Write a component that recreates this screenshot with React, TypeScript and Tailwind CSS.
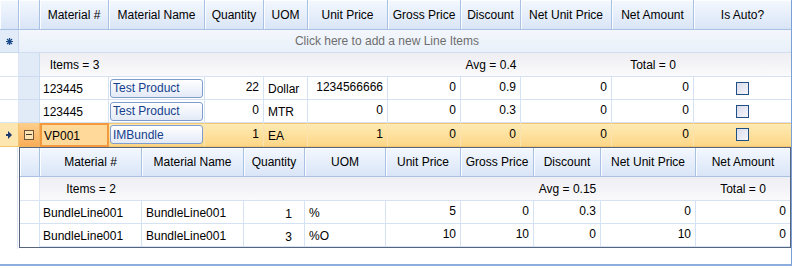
import React from "react";

const OUTER_COLS =
  "grid grid-cols-[19px_21px_69px_96px_59px_44px_80px_73px_60px_91px_82px_97px]";
const CHILD_COLS =
  "grid grid-cols-[20px_102px_102px_61px_81px_75px_73px_67px_95px_94px]";

type Row = {
  mat: string;
  name: string;
  qty: string;
  uom: string;
  unit: string;
  gross: string;
  disc: string;
  nup: string;
  na: string;
};

const ROWS: Row[] = [
  { mat: "123445", name: "Test Product", qty: "22", uom: "Dollar", unit: "1234566666", gross: "0", disc: "0.9", nup: "0", na: "0" },
  { mat: "123445", name: "Test Product", qty: "0", uom: "MTR", unit: "0", gross: "0", disc: "0.3", nup: "0", na: "0" },
];

const SELECTED: Row = { mat: "VP001", name: "IMBundle", qty: "1", uom: "EA", unit: "1", gross: "0", disc: "0", nup: "0", na: "0" };

const CHILD_ROWS = [
  { mat: "BundleLine001", name: "BundleLine001", qty: "1", uom: "%", unit: "5", gross: "0", disc: "0.3", nup: "0", na: "0" },
  { mat: "BundleLine001", name: "BundleLine001", qty: "3", uom: "%O", unit: "10", gross: "10", disc: "0", nup: "10", na: "0" },
];

const OUTER_HEADERS = ["Material #", "Material Name", "Quantity", "UOM", "Unit Price", "Gross Price", "Discount", "Net Unit Price", "Net Amount", "Is Auto?"];
const CHILD_HEADERS = ["Material #", "Material Name", "Quantity", "UOM", "Unit Price", "Gross Price", "Discount", "Net Unit Price", "Net Amount"];

/* ---------------- small pieces ---------------- */

function HeadCell({ children, last }: { children?: React.ReactNode; last?: boolean }) {
  return (
    <div
      className={`flex items-center justify-center border-b border-[#a9c2e4] bg-linear-to-b from-[#f4f8fe] to-[#d9e5f7] shadow-[inset_1px_1px_0_#fcfdff] whitespace-nowrap ${
        last ? "" : "border-r"
      }`}
    >
      {children}
    </div>
  );
}

function SummaryCell({ children }: { children?: React.ReactNode }) {
  return (
    <div className="flex items-center justify-center border-b border-[#d6e2f2] bg-linear-to-b from-[#eeeef3] to-[#fafafc] whitespace-nowrap">
      {children}
    </div>
  );
}

function Cell({
  children,
  right,
  num,
  pl = "pl-[3px]",
  last,
  sel,
}: {
  children?: React.ReactNode;
  right?: boolean;
  num?: boolean;
  pl?: string;
  last?: boolean;
  sel?: boolean;
}) {
  return (
    <div
      className={[
        "flex items-center whitespace-nowrap border-b",
        sel ? "border-[#f2c56f]" : "border-[#d5e2f3]",
        last ? "" : sel ? "border-r border-r-[#fae3b0]" : "border-r",
        right ? "justify-end pr-[4px]" : pl,
      ].join(" ")}
    >
      <span className={num ? "-translate-y-[1px]" : "translate-y-[1px]"}>{children}</span>
    </div>
  );
}

function TextBox({ text }: { text: string }) {
  return (
    <div className="flex items-center border-b border-r border-[#d5e2f3] pl-[1px] pr-[1px]">
      <div className="flex h-[19px] w-full items-center rounded-[3px] border border-[#7f9dcc] bg-linear-to-b from-[#ffffff] to-[#e3eaf7] pl-[2px] text-[#163f8c] whitespace-nowrap">
        {text}
      </div>
    </div>
  );
}

function CheckBox() {
  return (
    <span className="block h-[13px] w-[13px] border-[1.5px] border-[#1f4f85] bg-linear-to-br from-[#d9dcec] to-[#f6f6fb]" />
  );
}

function ArrowIcon() {
  return (
    <svg width="6" height="8" viewBox="0 0 6 8">
      <path d="M0 3h2V0l4 4-4 4V5H0z" fill="#1b3a6e" />
    </svg>
  );
}

function StarIcon() {
  return (
    <svg width="7" height="7" viewBox="0 0 7 7" stroke="#1d4a8a" strokeWidth="1.2">
      <path d="M3.5 0v7M0 3.5h7M1 1l5 5M6 1l-5 5" />
    </svg>
  );
}

/* ---------------- Component ---------------- */

export default function App() {
  return (
    <div className="h-[268px] w-[793px] bg-white text-[12px] text-black font-['Liberation_Sans',Arial,sans-serif]">
      <div className="flex h-[266px] w-[792px] flex-col overflow-hidden border-r border-b-2 border-r-[#7aa0d6] border-b-[#8caedd]">
        {/* Header */}
        <div className={`${OUTER_COLS} h-[30px] shrink-0`}>
          <HeadCell />
          <HeadCell />
          {OUTER_HEADERS.map((h, i) => (
            <HeadCell key={h} last={i === OUTER_HEADERS.length - 1}>
              {h}
            </HeadCell>
          ))}
        </div>

        {/* New row */}
        <div className={`${OUTER_COLS} h-[23px] shrink-0`}>
          <div className="flex items-center justify-center border-r border-b border-[#c9d9ef] bg-[#e2ebf8]">
            <StarIcon />
          </div>
          <div className="col-span-11 flex items-center justify-center border-b border-[#d0def2] bg-linear-to-b from-[#f4f7fc] to-[#e9f0fa] pr-[36px] text-[#6e6e6e]">
            Click here to add a new Line Items
          </div>
        </div>

        {/* Summary */}
        <div className={`${OUTER_COLS} h-[24px] shrink-0`}>
          <div className="border-r border-b border-[#dce5f2] bg-white" />
          <div className="border-r border-b border-[#cbdaef] bg-[#e1eaf7]" />
          <SummaryCell>Items = 3</SummaryCell>
          <SummaryCell />
          <SummaryCell />
          <SummaryCell />
          <SummaryCell />
          <SummaryCell />
          <SummaryCell>Avg = 0.4</SummaryCell>
          <SummaryCell />
          <SummaryCell>Total = 0</SummaryCell>
          <SummaryCell />
        </div>

        {/* Data rows */}
        {ROWS.map((r, i) => (
          <div key={i} className={`${OUTER_COLS} h-[23px] shrink-0`}>
            <div className="border-r border-b border-[#dce5f2] bg-white" />
            <div className="border-r border-b border-[#cbdaef] bg-[#e1eaf7]" />
            <Cell>{r.mat}</Cell>
            <TextBox text={r.name} />
            <Cell right num>{r.qty}</Cell>
            <Cell pl="pl-[4px]">{r.uom}</Cell>
            <Cell right num>{r.unit}</Cell>
            <Cell right num>{r.gross}</Cell>
            <Cell right num>{r.disc}</Cell>
            <Cell right num>{r.nup}</Cell>
            <Cell right num>{r.na}</Cell>
            <div className="flex items-center justify-center border-b border-[#d5e2f3]">
              <CheckBox />
            </div>
          </div>
        ))}

        {/* Selected row */}
        <div className={`${OUTER_COLS} h-[24px] shrink-0 bg-linear-to-b from-[#feebb4] to-[#fdd686] shadow-[inset_0_1px_0_#f3c672]`}>
          <div className="flex items-center justify-center border-r border-b border-[#f2c56f] bg-[#fde6b0]">
            <ArrowIcon />
          </div>
          <div className="flex items-center justify-center border-r border-b border-[#f0b45f] bg-linear-to-b from-[#fccf8c] to-[#f9ad57]">
            <span className="flex h-[10px] w-[10px] items-center justify-center border border-[#6e5538] bg-[#fde2b2]">
              <span className="block h-[1px] w-[6px] bg-[#4a3a28]" />
            </span>
          </div>
          <div className="flex items-center border-2 border-[#f39a3f] bg-[#fed99a] pl-[2px]">
            <span className="translate-y-[1px]">{SELECTED.mat}</span>
          </div>
          <div className="flex items-center border-b border-r border-[#f2c56f] border-r-[#fae3b0] pl-[1px] pr-[1px]">
            <div className="flex h-[19px] w-full items-center rounded-[3px] border border-[#7f9dcc] bg-linear-to-b from-[#ffffff] to-[#e3eaf7] pl-[2px] text-[#163f8c]">
              {SELECTED.name}
            </div>
          </div>
          <Cell sel right num>{SELECTED.qty}</Cell>
          <Cell sel pl="pl-[4px]">{SELECTED.uom}</Cell>
          <Cell sel right num>{SELECTED.unit}</Cell>
          <Cell sel right num>{SELECTED.gross}</Cell>
          <Cell sel right num>{SELECTED.disc}</Cell>
          <Cell sel right num>{SELECTED.nup}</Cell>
          <Cell sel right num>{SELECTED.na}</Cell>
          <div className="flex items-center justify-center border-b border-[#f2c56f]">
            <CheckBox />
          </div>
        </div>

        {/* Detail (child grid) */}
        <div className="flex h-[102px] shrink-0">
          <div className="w-[19px] shrink-0">
            <div className="h-full w-[18px] border-r border-[#dfe6f0]" />
          </div>
          <div className="h-[101px] w-[772px] shrink-0 border border-[#56657d]">
            <div className={`${CHILD_COLS} h-[29px]`}>
              <HeadCell />
              {CHILD_HEADERS.map((h, i) => (
                <HeadCell key={h} last={i === CHILD_HEADERS.length - 1}>
                  {h}
                </HeadCell>
              ))}
            </div>
            <div className={`${CHILD_COLS} h-[24px]`}>
              <div className="border-r border-b border-[#dce5f2] bg-white" />
              <SummaryCell>Items = 2</SummaryCell>
              <SummaryCell />
              <SummaryCell />
              <SummaryCell />
              <SummaryCell />
              <SummaryCell />
              <SummaryCell>Avg = 0.15</SummaryCell>
              <SummaryCell />
              <SummaryCell>Total = 0</SummaryCell>
            </div>
            {CHILD_ROWS.map((r, i) => (
              <div key={i} className={`${CHILD_COLS} h-[23px]`}>
                <div className={`border-r border-[#d5e2f3] bg-white ${i === 0 ? "border-b" : ""}`} />
                <Cell>{r.mat}</Cell>
                <Cell pl="pl-[4px]">{r.name}</Cell>
                <div className="flex items-start justify-end border-r border-b border-[#d5e2f3] pt-[4px] pr-[12px]">
                  {r.qty}
                </div>
                <Cell pl="pl-[4px]">{r.uom}</Cell>
                <Cell right num>{r.unit}</Cell>
                <Cell right num>{r.gross}</Cell>
                <Cell right num>{r.disc}</Cell>
                <Cell right num>{r.nup}</Cell>
                <Cell right num last>{r.na}</Cell>
              </div>
            ))}
          </div>
        </div>

        <div className="flex-1 bg-white" />
      </div>
    </div>
  );
}
